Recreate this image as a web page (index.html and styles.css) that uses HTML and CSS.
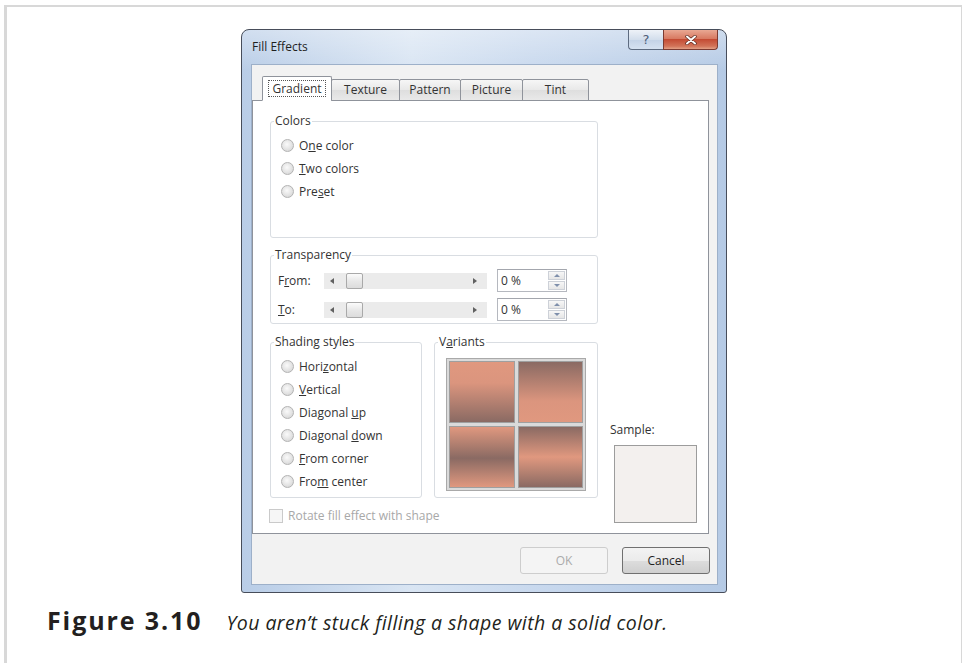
FILE: index.html
```html
<!DOCTYPE html>
<html lang="en">
<head>
<meta charset="utf-8">
<title>Fill Effects</title>
<link rel="stylesheet" href="styles.css">
</head>
<body>
<div class="frame">
  <div class="dialog">
    <div class="titlebar">
      <span class="title">Fill Effects</span>
      <div class="caption-btns">
        <span class="cbtn help">?</span>
        <span class="cbtn close">
          <svg width="12" height="10" viewBox="0 0 12 10"><path d="M2 1.5 L10 8.5 M10 1.5 L2 8.5" stroke="#5a2a20" stroke-width="3.4" stroke-linecap="round"/><path d="M2 1.5 L10 8.5 M10 1.5 L2 8.5" stroke="#fff" stroke-width="2" stroke-linecap="round"/></svg>
        </span>
      </div>
    </div>
    <div class="client">
      <div class="tabs">
        <span class="tab active t-grad"><span class="focus">Gradient</span></span>
        <span class="tab t-tex">Texture</span>
        <span class="tab t-pat">Pattern</span>
        <span class="tab t-pic">Picture</span>
        <span class="tab t-tint">Tint</span>
      </div>
      <div class="panel">
        <div class="main-col">
          <fieldset class="group colors">
            <legend>Colors</legend>
            <div class="radio"><span class="dot"></span><span>O<u>n</u>e color</span></div>
            <div class="radio"><span class="dot"></span><span><u>T</u>wo colors</span></div>
            <div class="radio"><span class="dot"></span><span>Pre<u>s</u>et</span></div>
          </fieldset>
          <fieldset class="group transp">
            <legend>Transparency</legend>
            <div class="trow">
              <span class="tlabel">F<u>r</u>om:</span>
              <span class="track"><span class="arr-l"></span><span class="thumb"></span><span class="arr-r"></span></span>
              <span class="spin"><span class="val">0 %</span><span class="arrows"><span class="up"><i></i></span><span class="down"><i></i></span></span></span>
            </div>
            <div class="trow">
              <span class="tlabel"><u>T</u>o:</span>
              <span class="track"><span class="arr-l"></span><span class="thumb"></span><span class="arr-r"></span></span>
              <span class="spin"><span class="val">0 %</span><span class="arrows"><span class="up"><i></i></span><span class="down"><i></i></span></span></span>
            </div>
          </fieldset>
          <div class="lower">
            <fieldset class="group shading">
              <legend>Shading styles</legend>
              <div class="radio"><span class="dot"></span><span>Hori<u>z</u>ontal</span></div>
              <div class="radio"><span class="dot"></span><span><u>V</u>ertical</span></div>
              <div class="radio"><span class="dot"></span><span>Diagonal <u>u</u>p</span></div>
              <div class="radio"><span class="dot"></span><span>Diagonal <u>d</u>own</span></div>
              <div class="radio"><span class="dot"></span><span><u>F</u>rom corner</span></div>
              <div class="radio"><span class="dot"></span><span>Fro<u>m</u> center</span></div>
            </fieldset>
            <fieldset class="group variants">
              <legend>V<u>a</u>riants</legend>
              <div class="swatches">
                <span class="sw sw1"></span>
                <span class="sw sw2"></span>
                <span class="sw sw3"></span>
                <span class="sw sw4"></span>
              </div>
            </fieldset>
          </div>
          <div class="check"><span class="box"></span><span>Rotate fill effect with shape</span></div>
        </div>
        <div class="sample">
          <span class="sample-label">Sample:</span>
          <span class="sample-box"></span>
        </div>
      </div>
      <div class="buttons">
        <span class="btn disabled">OK</span>
        <span class="btn">Cancel</span>
      </div>
    </div>
  </div>
  <p class="caption"><b>Figure 3.10</b><i>You aren’t stuck filling a shape with a solid color.</i></p>
</div>
</body>
</html>
```
FILE: styles.css
```css
html, body {
  margin: 0;
  background: #fff;
  height: 663px;
  overflow: hidden;
}

body {
  font-family: "Open Sans", "Noto Sans", sans-serif;
  color: #333;
}

/* light page frame around the figure */
.frame {
  margin: 5px 0 0 4px;
  width: 954px;
  height: 656px;
  border-top: 2px solid #d8d8d8;
  border-left: 3px solid #d8d8d8;
  border-right: 1px solid #d8d8d8;
  box-sizing: content-box;
}

/* Windows 7 style dialog window */
.dialog {
  margin: 22px 0 0 234px;
  width: 486px;
  height: 564px;
  box-sizing: border-box;
  border: 1px solid #474d5a;
  border-radius: 8px 8px 3px 3px;
  background:
    linear-gradient(to bottom, rgba(255,255,255,0.35), rgba(255,255,255,0) 40px),
    linear-gradient(to right, #b9cde7, #d9e5f3 35%, #c9d9ee 60%, #b5cae5);
  padding: 0 8px 7px 9px;
  display: flex;
  flex-direction: column;
}

.titlebar {
  height: 34px;
  display: flex;
  justify-content: space-between;
  align-items: flex-start;
  flex: none;
}

.title {
  margin: 9px 0 0 1px;
  font-size: 12px;
  line-height: 16px;
  color: #1f1f1f;
}

.caption-btns {
  display: flex;
}

.cbtn {
  height: 20px;
  box-sizing: border-box;
  display: flex;
  align-items: center;
  justify-content: center;
  border: 1px solid #5d6b80;
  border-top: none;
}

.help {
  width: 35px;
  border-radius: 0 0 0 4px;
  border-right: none;
  background: linear-gradient(to bottom, #eef2f8, #d3deec 50%, #c3d2e6 51%, #d6e2f1);
  font-size: 13px;
  color: #4d5d78;
  font-family: "DejaVu Sans", sans-serif;
}

.close {
  width: 55px;
  border-radius: 0 0 4px 0;
  background: linear-gradient(to bottom, #e9a893, #d87a62 45%, #c44c34 50%, #d27358 85%, #e3a187);
  border-color: #7c3b31;
}

/* dialog client area */
.client {
  flex: 1;
  background: #f2f2f2;
  border: 1px solid #9db0c9;
  display: flex;
  flex-direction: column;
  font-size: 12px;
}

.tabs {
  display: flex;
  align-items: flex-end;
  margin: 11px 0 -1px 0;
  padding-left: 10px;
  position: relative;
  z-index: 1;
  height: 25px;
}

.tab {
  box-sizing: border-box;
  height: 22px;
  margin-left: -1px;
  border: 1px solid #8f939b;
  border-radius: 2px 2px 0 0;
  background: linear-gradient(to bottom, #f6f6f6, #e8e8e8 50%, #dedede 51%, #e9e9e9);
  display: flex;
  align-items: center;
  justify-content: center;
  line-height: 16px;
  color: #333;
}

.tab.active {
  height: 25px;
  margin-left: 0;
  background: #fff;
  border-bottom-color: #fff;
}

.t-grad { width: 70px; }
.t-tex { width: 69px; }
.t-pat { width: 62px; }
.t-pic { width: 63px; }
.t-tint { width: 67px; }

.focus {
  border: 1px dotted #555;
  padding: 0 3px;
  line-height: 15px;
  margin-top: -1px;
}

.panel {
  margin-right: 8px;
  background: #fff;
  border: 1px solid #8f939b;
  padding: 12px 0 10px 17px;
  display: grid;
  grid-template-columns: 328px 87px;
  column-gap: 12px;
}

.main-col {
  display: flex;
  flex-direction: column;
}

fieldset.group {
  margin: 0;
  padding: 0;
  min-inline-size: 0;
  box-sizing: border-box;
  border: 1px solid #d9dde2;
  border-radius: 3px;
}

fieldset.group legend {
  margin-left: 3px;
  padding: 0 1px;
  font-size: 12px;
  line-height: 16px;
  color: #333;
}

.colors {
  height: 125px;
  padding-top: 5px !important;
}

.radio {
  height: 23px;
  display: flex;
  align-items: center;
  padding-left: 10px;
  line-height: 16px;
  color: #333;
}

.dot {
  width: 13px;
  height: 13px;
  box-sizing: border-box;
  border-radius: 50%;
  border: 1px solid #b3b3b3;
  background: radial-gradient(circle at 45% 40%, #fafafa, #e3e3e3 55%, #cfcfcf);
  margin-right: 5px;
  flex: none;
}

.transp {
  margin-top: 9px !important;
  height: 77px;
  padding-top: 6px !important;
}

.trow {
  height: 23px;
  display: flex;
  align-items: center;
  padding-left: 7px;
}

.trow + .trow {
  margin-top: 6px;
}

.tlabel {
  width: 46px;
  color: #333;
}

.track {
  width: 163px;
  height: 16px;
  background: #ebebeb;
  display: flex;
  align-items: center;
}

.arr-l, .arr-r {
  width: 0;
  height: 0;
  border-top: 3px solid transparent;
  border-bottom: 3px solid transparent;
}

.arr-l {
  margin-left: 6px;
  border-right: 4px solid #606060;
}

.arr-r {
  margin-left: auto;
  margin-right: 10px;
  border-left: 4px solid #606060;
}

.thumb {
  margin-left: 12px;
  width: 17px;
  height: 16px;
  box-sizing: border-box;
  border: 1px solid #a9a9a9;
  border-radius: 2px;
  background: linear-gradient(to bottom, #fbfbfb, #e8e8e8 50%, #dcdcdc);
}

.spin {
  margin-left: 10px;
  width: 70px;
  height: 23px;
  box-sizing: border-box;
  border: 1px solid #b5b8bf;
  border-top-color: #a3a6ad;
  background: #fff;
  display: flex;
}

.val {
  flex: 1;
  padding-left: 3px;
  line-height: 21px;
  color: #333;
}

.arrows {
  width: 17px;
  display: flex;
  flex-direction: column;
  padding: 1px 1px 1px 0;
}

.arrows span {
  flex: 1;
  border: 1px solid #cdd1d8;
  background: linear-gradient(to bottom, #f7f7f7, #e6e6e6);
  display: flex;
  align-items: center;
  justify-content: center;
}

.arrows span + span {
  margin-top: 1px;
}

.arrows i {
  width: 0;
  height: 0;
  border-left: 3px solid transparent;
  border-right: 3px solid transparent;
}

.up i {
  border-bottom: 3px solid #7f8fab;
}

.down i {
  border-top: 3px solid #7f8fab;
}

.lower {
  margin-top: 10px;
  display: flex;
  gap: 12px;
}

.shading {
  width: 152px;
  height: 164px;
  padding-top: 5px !important;
}

.variants {
  width: 164px;
  height: 164px;
}

.swatches {
  margin: 8px 0 0 11px;
  width: 140px;
  height: 133px;
  box-sizing: border-box;
  border: 1px solid #a9a9a9;
  background: #dadada;
  padding: 2px;
  display: grid;
  grid-template-columns: 1fr 1fr;
  grid-template-rows: 1fr 1fr;
  gap: 3px;
}

.sw {
  border: 1px solid #9f9f9f;
}

.sw1 { background: linear-gradient(to bottom, #e0987f, #db957e 35%, #8a6a63); }
.sw2 { background: linear-gradient(to bottom, #8a6a63, #db957e 65%, #e0987f); }
.sw3 { background: linear-gradient(to bottom, #e0987f, #8a6a63 52%, #e0987f); }
.sw4 { background: linear-gradient(to bottom, #8a6a63, #e0987f 50%, #8a6a63); }

.check {
  margin-top: 10px;
  height: 15px;
  display: flex;
  align-items: center;
  margin-left: -1px;
  color: #a8a8a8;
  line-height: 16px;
}

.check .box {
  width: 14px;
  height: 14px;
  box-sizing: border-box;
  border: 1px solid #cacaca;
  background: #f6f6f6;
  margin-right: 5px;
}

.sample {
  align-self: end;
  display: flex;
  flex-direction: column;
}

.sample-label {
  line-height: 16px;
  color: #333;
}

.sample-box {
  margin: 7px 0 0 4px;
  width: 83px;
  height: 78px;
  box-sizing: border-box;
  border: 1px solid #9c9c9c;
  background: #f3f0ee;
}

.buttons {
  margin-top: 13px;
  padding-right: 7px;
  display: flex;
  justify-content: flex-end;
  gap: 14px;
}

.btn {
  width: 88px;
  height: 27px;
  box-sizing: border-box;
  border: 1px solid #707070;
  border-radius: 3px;
  background: linear-gradient(to bottom, #f3f3f3, #ebebeb 50%, #dddddd 51%, #cfcfcf);
  display: flex;
  align-items: center;
  justify-content: center;
  color: #1f1f1f;
}

.btn.disabled {
  border-color: #cdcdcd;
  background: #f4f4f4;
  color: #ababab;
}

/* figure caption below the screenshot */
.caption {
  margin: 12px 0 0 40px;
  display: flex;
  align-items: baseline;
  color: #231f20;
}

.caption b {
  font-size: 25px;
  line-height: 30px;
  font-weight: 700;
  letter-spacing: 1.9px;
}

.caption i {
  margin-left: 24px;
  font-size: 19.5px;
  letter-spacing: 0.45px;
}
```
